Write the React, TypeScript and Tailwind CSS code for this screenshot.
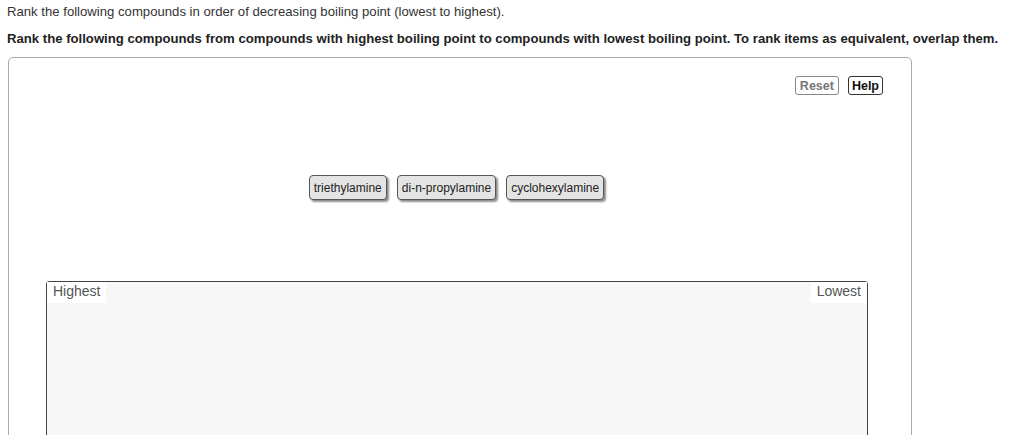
import React from 'react';

const items = ['triethylamine', 'di-n-propylamine', 'cyclohexylamine'];

const App: React.FC = () => {
  return (
    <div className="w-[1024px] h-[435px] overflow-hidden bg-white pl-[7px] pt-[4px] font-['Liberation_Sans',Arial,sans-serif]">
      <p className="text-[13.15px] leading-[16px] text-[#333]">
        Rank the following compounds in order of decreasing boiling point (lowest to highest).
      </p>
      <p className="mt-[11px] text-[13.15px] leading-[16px] font-bold text-[#222]">
        Rank the following compounds from compounds with highest boiling point to compounds with lowest boiling point. To rank items as equivalent, overlap them.
      </p>

      {/* panneau principal */}
      <div className="mt-[10px] ml-[1px] w-[904px] h-[420px] border border-[#aaa] rounded-[5px] flex flex-col">
        <div className="flex justify-end gap-[9px] pt-[18px] pr-[28px]">
          <button className="h-[19px] px-[4px] border border-[#888] rounded-[3px] bg-white text-[12.5px] leading-[16px] font-bold text-[#777]">
            Reset
          </button>
          <button className="h-[19px] px-[3px] border border-[#333] rounded-[3px] bg-white text-[12.5px] leading-[16px] font-bold text-[#111]">
            Help
          </button>
        </div>

        <div className="flex justify-center gap-[10px] mt-[80px] pr-[7px]">
          {items.map((it) => (
            <div
              key={it}
              className="h-[25px] px-[4px] flex items-center border border-[#555] rounded-[4px] bg-[#e4e4e4] shadow-[2px_2px_2px_rgba(0,0,0,0.45)] text-[12px] text-[#222]"
            >
              {it}
            </div>
          ))}
        </div>

        <div className="mt-[81px] ml-[37px] w-[822px] flex-1 border border-[#444] rounded-t-[3px] bg-[#f7f7f7]">
          <div className="flex justify-between">
            <span className="bg-white px-[6px] h-[21px] text-[14px] leading-[19px] text-[#555]">Highest</span>
            <span className="bg-white px-[6px] h-[21px] text-[14px] leading-[19px] text-[#555]">Lowest</span>
          </div>
        </div>
      </div>
    </div>
  );
};

export default App;
